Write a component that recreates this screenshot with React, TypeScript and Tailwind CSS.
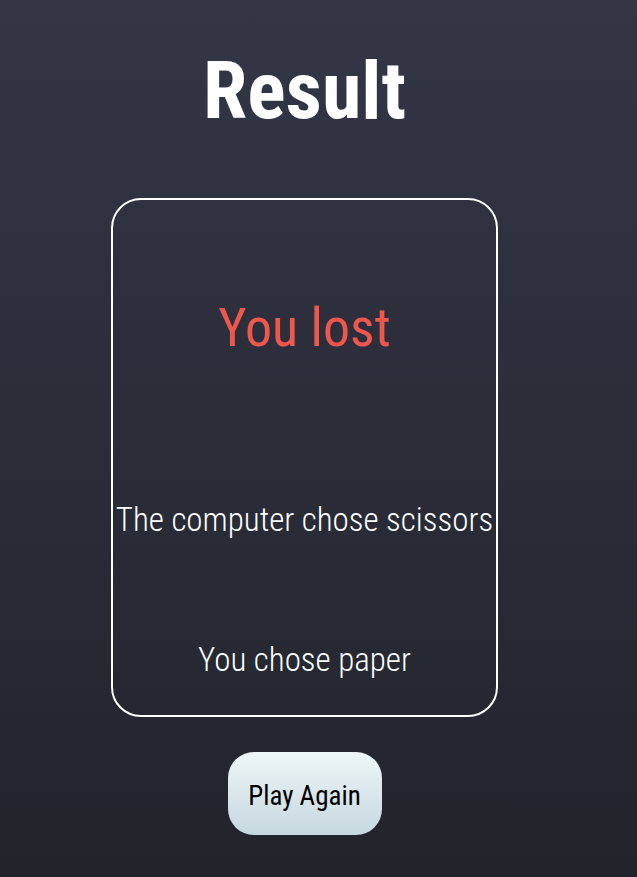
const condensed = { fontFamily: "Roboto, 'DejaVu Sans', sans-serif" };

export default function App() {
  return (
    <div className="h-[877px] w-full bg-gradient-to-b from-[#333645] to-[#22242c]">
      <div className="flex w-[609px] flex-col items-center" style={condensed}>
        <h1 className="pt-[51px] text-[80px] leading-none font-bold font-stretch-condensed text-white">
          Result
        </h1>

        {/* result card */}
        <div className="mt-[67px] flex h-[519px] w-[387px] flex-col items-center rounded-[30px] border-2 border-white">
          <h2 className="mt-[101px] text-[54px] leading-none font-normal font-stretch-condensed text-[#f0574c]">
            You lost
          </h2>
          <p className="mt-[148px] text-[33px] leading-none font-light font-stretch-condensed whitespace-nowrap text-white">
            The computer chose scissors
          </p>
          <p className="mt-[107px] text-[33px] leading-none font-light font-stretch-condensed text-white">
            You chose paper
          </p>
        </div>

        <button className="mt-[35px] h-[83px] w-[154px] rounded-[26px] bg-gradient-to-b from-[#eef6f8] to-[#c6d8df] pt-[5px] text-[27px] leading-none font-normal font-stretch-condensed text-black">
          Play Again
        </button>
      </div>
    </div>
  );
}
